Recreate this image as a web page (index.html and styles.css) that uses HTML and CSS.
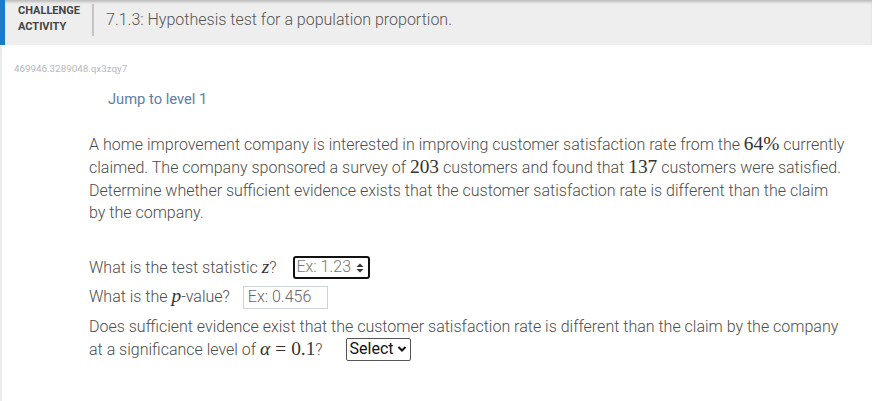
FILE: index.html
```html
<!DOCTYPE html>
<html>
<head>
<meta charset="utf-8">
<link rel="stylesheet" href="styles.css">
</head>
<body>
<div class="activity">
  <div class="header">
    <div class="label">CHALLENGE<br>ACTIVITY</div>
    <div class="divider"></div>
    <div class="title">7.1.3: Hypothesis test for a population proportion.</div>
  </div>
  <div class="content">
    <div class="id">469946.3289048.qx3zqy7</div>
    <div class="jump">Jump to level 1</div>
    <p class="problem">A home improvement company is interested in improving customer satisfaction rate from the <span class="m">64%</span> currently claimed. The company sponsored a survey of <span class="m">203</span> customers and found that <span class="m">137</span> customers were satisfied. Determine whether sufficient evidence exists that the customer satisfaction rate is different than the claim by the company.</p>
    <div class="q q1">What is the test statistic <span class="m mi">z</span>?<span class="box focused"><span class="ph">Ex: 1.23</span><svg class="spin" width="8" height="12" viewBox="0 0 8 12"><path d="M0.5 5 L4 1.5 L7.5 5 Z M0.5 7 L4 10.5 L7.5 7 Z" fill="#333"/></svg></span>
    </div>
    <div class="q q2">What is the <span class="m mi">p</span>-value?<span class="box plain"><span class="ph">Ex: 0.456</span></span>
    </div>
    <div class="q q3">Does sufficient evidence exist that the customer satisfaction rate is different than the claim by the company at a significance level of <span class="m mi">α</span><span class="m eq">=</span><span class="m">0.1</span>?<span class="select">Select<svg width="10" height="8" viewBox="0 0 10 8"><path d="M1.5 2 L5 5.5 L8.5 2" stroke="#111" stroke-width="2" fill="none"/></svg></span>
    </div>
  </div>
</div>
</body>
</html>
```
FILE: styles.css
```css
* { box-sizing: border-box; }
html, body { margin: 0; padding: 0; background: #fff; }
body { font-family: Roboto, "Noto Sans", sans-serif; color: #4d4d4d; width: 874px; height: 401px; overflow: hidden; }

.activity { width: 872px; border-left: 2px solid #eaeaea; min-height: 401px; }

.header {
  display: flex;
  align-items: flex-start;
  height: 45px;
  margin-left: -2px;
  background: #eeeeee;
  border-left: 5px solid #1a7bc9;
  box-shadow: inset 0 3px 3px -1px rgba(0,0,0,0.22);
  padding-left: 13px;
}
.label {
  font-size: 11px;
  font-weight: 700;
  line-height: 16px;
  color: #444;
  padding-top: 3px;
}
.divider {
  width: 2px;
  height: 32px;
  background: #c4c4c4;
  margin: 4px 12px 0 12px;
}
.title {
  font-size: 16px;
  font-weight: 300;
  color: #555;
  line-height: 20px;
  padding-top: 10px;
}

.content { padding: 0 0 0 12px; }
.id {
  font-size: 9.8px;
  color: #b8b8b8;
  margin-top: 18px;
  line-height: 12px;
}
.jump {
  font-size: 14.7px;
  color: #5d7ea6;
  margin: 15px 0 0 94px;
  line-height: 18px;
}
.problem {
  margin: 26px 0 0 75px;
  width: 758px;
  font-size: 16px;
  font-weight: 300;
  line-height: 22.8px;
  color: #4d4d4d;
}
.m { font-family: "Liberation Serif", "DejaVu Serif", serif; font-size: 1.21em; font-weight: 400; color: #333; line-height: 1; }
.mi { font-style: italic; }
.eq { margin: 0 5px; }

.q {
  margin-left: 75px;
  font-size: 16px;
  font-weight: 300;
  line-height: 22.8px;
  color: #4d4d4d;
}
.q1 { margin-top: 32px; }
.q2 { margin-top: 6px; }
.q3 { margin-top: 7px; width: 758px; }

.box {
  display: inline-flex;
  align-items: center;
  vertical-align: middle;
  height: 23px;
  font-size: 16px;
  font-weight: 300;
  color: #777;
}
.box.focused {
  width: 77px;
  border: 2px solid #111;
  border-radius: 3px;
  padding: 0 4px 0 1px;
  justify-content: space-between;
  margin-left: 17px;
  margin-top: -3px;
}
.box.plain {
  width: 85px;
  border: 1px solid #cdd3d9;
  padding: 0 4px;
  margin-left: 13px;
  color: #666;
}
.spin { margin-top: 1px; }

.select {
  display: inline-flex;
  align-items: center;
  gap: 3px;
  vertical-align: middle;
  height: 23px;
  margin-left: 23px;
  margin-top: -3px;
  padding: 0 3px 0 3px;
  border: 1px solid #555;
  border-radius: 2px;
  font-size: 16px;
  font-weight: 400;
  color: #111;
  font-family: Roboto, sans-serif;
}
```
